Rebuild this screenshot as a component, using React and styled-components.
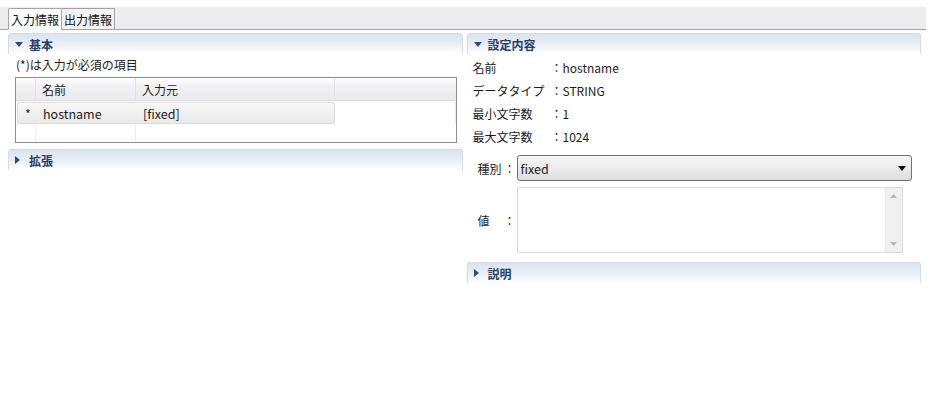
import styled, { createGlobalStyle } from "styled-components";

const GlobalStyle = createGlobalStyle`
  html, body {
    margin: 0;
    padding: 0;
    background: #ffffff;
  }
  body {
    font-family: "Noto Sans CJK JP", "Noto Sans", sans-serif;
    font-size: 12px;
    color: #1b1b1b;
  }
`;

const infoRows = [
  { label: "名前", value: "hostname" },
  { label: "データタイプ", value: "STRING" },
  { label: "最小文字数", value: "1" },
  { label: "最大文字数", value: "1024" },
];

const DownArrow = () => (
  <svg width="8" height="5" viewBox="0 0 8 5">
    <path d="M0 0 L8 0 L4 5 Z" fill="#2d4b73" />
  </svg>
);

const RightArrow = () => (
  <svg width="5" height="8" viewBox="0 0 5 8">
    <path d="M0 0 L5 4 L0 8 Z" fill="#2d4b73" />
  </svg>
);

const Section = ({ title, open }) => (
  <SectionHeader>
    <ArrowBox>{open ? <DownArrow /> : <RightArrow />}</ArrowBox>
    <SectionTitle>{title}</SectionTitle>
  </SectionHeader>
);

const App = () => {
  return (
    <Page>
      <GlobalStyle />
      <TabBar>
        <Tab $active>入力情報</Tab>
        <Tab>出力情報</Tab>
      </TabBar>
      <Columns>
        <Column>
          <Section title="基本" open />
          <Note>(*)は入力が必須の項目</Note>
          <Table>
            <HeadCell />
            <HeadCell>名前</HeadCell>
            <HeadCell>入力元</HeadCell>
            <HeadCell $last />
            <SelectedRow>
              <Cell $center>*</Cell>
              <Cell>hostname</Cell>
              <Cell>[fixed]</Cell>
            </SelectedRow>
            <BlankCell />
            <BlankCell />
            <BlankCell />
            <BlankCell $last />
          </Table>
          <SectionGap>
            <Section title="拡張" />
          </SectionGap>
        </Column>
        <Divider />
        <Column>
          <Section title="設定内容" open />
          <InfoList>
            {infoRows.map((r) => (
              <InfoRow key={r.label}>
                <InfoLabel>{r.label}</InfoLabel>
                <span>：{r.value}</span>
              </InfoRow>
            ))}
          </InfoList>
          <FormRow>
            <FormLabel>種別</FormLabel>
            <FormColon>：</FormColon>
            <Select>
              <span>fixed</span>
              <svg width="8" height="5" viewBox="0 0 8 5">
                <path d="M0 0 L8 0 L4 5 Z" fill="#111" />
              </svg>
            </Select>
          </FormRow>
          <FormRow $tall>
            <FormLabel>値</FormLabel>
            <FormColon>：</FormColon>
            <TextArea>
              <ScrollBar>
                <svg width="7" height="4" viewBox="0 0 7 4">
                  <path d="M0 4 L3.5 0 L7 4 Z" fill="#b8b8b8" />
                </svg>
                <svg width="7" height="4" viewBox="0 0 7 4">
                  <path d="M0 0 L7 0 L3.5 4 Z" fill="#b8b8b8" />
                </svg>
              </ScrollBar>
            </TextArea>
          </FormRow>
          <SectionGap $small>
            <Section title="説明" />
          </SectionGap>
        </Column>
      </Columns>
    </Page>
  );
};

export default App;

const Page = styled.div`
  width: 930px;
  height: 410px;
  padding-top: 7px;
  box-sizing: border-box;
  overflow: hidden;
`;

const TabBar = styled.div`
  display: flex;
  align-items: flex-end;
  height: 22px;
  margin-right: 4px;
  padding-left: 8px;
  background: #ededf0;
  border-bottom: 1px solid #a3a3a3;
`;

const Tab = styled.div`
  height: ${(p) => (p.$active ? "22px" : "21px")};
  margin-bottom: ${(p) => (p.$active ? "-1px" : "0")};
  padding: 0 2px 0 2px;
  display: flex;
  align-items: center;
  box-sizing: border-box;
  font-size: 12px;
  color: #111;
  background: ${(p) => (p.$active ? "#ffffff" : "#f3f3f5")};
  border: 1px solid #a3a3a3;
  border-bottom: ${(p) => (p.$active ? "1px solid #ffffff" : "none")};
  border-left: ${(p) => (p.$active ? "1px solid #a3a3a3" : "none")};
  border-radius: ${(p) => (p.$active ? "2px 2px 0 0" : "0")};
`;

const Columns = styled.div`
  display: flex;
  padding: 3px 9px 0 8px;
`;

const Column = styled.div`
  flex: 1;
  display: flex;
  flex-direction: column;
`;

const Divider = styled.div`
  width: 4px;
`;

const SectionHeader = styled.div`
  height: 21px;
  display: flex;
  align-items: center;
  padding-left: 6px;
  border: 1px solid #d3dce8;
  border-bottom: none;
  border-radius: 3px 3px 0 0;
  background: linear-gradient(#d9e3f0, #edf1f7 60%, #ffffff);
  box-sizing: border-box;
`;

const ArrowBox = styled.span`
  width: 14px;
  display: flex;
  align-items: center;
`;

const SectionTitle = styled.span`
  font-weight: bold;
  font-size: 12px;
  color: #243f6a;
`;

const SectionGap = styled.div`
  margin-top: ${(p) => (p.$small ? "9px" : "6px")};
`;

const Note = styled.div`
  height: 23px;
  line-height: 22px;
  padding-left: 8px;
`;

const Table = styled.div`
  margin-left: 7px;
  width: 442px;
  height: 66px;
  display: grid;
  grid-template-columns: 20px 100px 199px 1fr;
  grid-template-rows: 23px 23px 1fr;
  border: 1px solid #8c8c8c;
  box-sizing: border-box;
`;

const HeadCell = styled.div`
  display: flex;
  align-items: center;
  padding-left: 6px;
  background: linear-gradient(#ffffff, #f1f1f4 40%, #ebebef);
  border-right: ${(p) => (p.$last ? "none" : "1px solid #e1e1e4")};
  border-bottom: 1px solid #d9d9dc;
  box-sizing: border-box;
`;

const SelectedRow = styled.div`
  grid-column: 1 / 4;
  display: grid;
  grid-template-columns: 20px 100px 1fr;
  margin: 1px 0 0 1px;
  border: 1px solid #dcdcdc;
  border-radius: 2px;
  background: linear-gradient(#f8f8f8, #e9e9eb);
`;

const Cell = styled.div`
  display: flex;
  align-items: center;
  justify-content: ${(p) => (p.$center ? "center" : "flex-start")};
  padding-left: ${(p) => (p.$center ? "0" : "5px")};
  font-size: 12.5px;
`;

const BlankCell = styled.div`
  border-right: ${(p) => (p.$last ? "none" : "1px solid #eeeeee")};
`;

const InfoList = styled.div`
  padding: 2px 0 0 6px;
`;

const InfoRow = styled.div`
  height: 23px;
  line-height: 23px;
  display: flex;
`;

const InfoLabel = styled.span`
  width: 78px;
`;

const FormRow = styled.div`
  display: flex;
  align-items: center;
  padding-left: 11px;
  margin-top: ${(p) => (p.$tall ? "6px" : "7px")};
`;

const FormLabel = styled.span`
  width: 26px;
`;

const FormColon = styled.span`
  width: 13px;
`;

const Select = styled.div`
  width: 395px;
  height: 26px;
  box-sizing: border-box;
  display: flex;
  align-items: center;
  justify-content: space-between;
  padding: 0 5px 0 3px;
  border: 1px solid #717171;
  border-radius: 3px;
  background: linear-gradient(#f7f7f7, #ececec 50%, #dcdcdc);
  font-size: 12.5px;
`;

const TextArea = styled.div`
  width: 386px;
  height: 66px;
  box-sizing: border-box;
  border: 1px solid #dadada;
  display: flex;
  justify-content: flex-end;
`;

const ScrollBar = styled.div`
  width: 17px;
  display: flex;
  flex-direction: column;
  justify-content: space-between;
  align-items: center;
  padding: 6px 0 6px;
  box-sizing: border-box;
  background: #f0f0f0;
  border-left: 1px solid #e8e8e8;
`;
